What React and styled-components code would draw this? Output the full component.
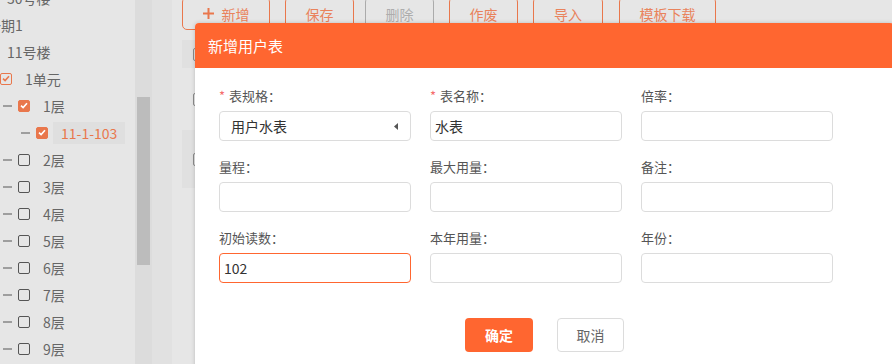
import React from "react";
import styled, { createGlobalStyle } from "styled-components";

const GlobalStyle = createGlobalStyle`
  html, body { margin: 0; padding: 0; background: #e6e6e6; }
  * { box-sizing: border-box; }
`;

const FONT = `"Noto Sans CJK SC", "Microsoft YaHei", "Noto Sans", sans-serif`;

const Page = styled.div`
  position: relative;
  display: flex;
  width: 892px;
  height: 364px;
  overflow: hidden;
  background: #e6e6e6;
  font-family: ${FONT};
`;

const Sidebar = styled.div`
  width: 135px;
  flex: none;
  overflow: hidden;
`;

const Tree = styled.div`
  margin-top: -16px;
  margin-left: -51px;
`;

const TreeRow = styled.div`
  display: flex;
  align-items: center;
  height: 27px;
  padding-left: ${(p) => p.$level * 18}px;
  white-space: nowrap;
`;

const Dash = styled.span`
  flex: none;
  width: 9px;
  height: 2px;
  margin-right: 6px;
  background: #9e9e9e;
`;

const Check = styled.span`
  flex: none;
  display: flex;
  align-items: center;
  justify-content: center;
  width: 12px;
  height: 12px;
  border-radius: 2px;
  border: 1px solid ${(p) => (p.$state === "none" ? "#555" : "#e9774c")};
  background: ${(p) => (p.$state === "checked" ? "#e9774c" : "transparent")};
  color: ${(p) => (p.$state === "checked" ? "#fff" : "#e9774c")};
`;

const NodeLabel = styled.span`
  margin-left: ${(p) => 5 + (p.$shift || 0)}px;
  padding: 0 8px;
  height: 22px;
  line-height: 22px;
  font-size: 14px;
  color: ${(p) => (p.$selected ? "#e9774c" : "#666")};
  background: ${(p) => (p.$selected ? "#dfdfdf" : "transparent")};
`;

const ScrollTrack = styled.div`
  width: 17px;
  flex: none;
  background: #dcdcdc;
  padding: 97px 2px 0;
`;

const ScrollThumb = styled.div`
  width: 13px;
  height: 168px;
  background: #bcbcbc;
`;

const Gutter = styled.div`
  width: 20px;
  flex: none;
  background: #e1e1e1;
`;

const Main = styled.div`
  flex: 1;
  padding-left: 10px;
`;

const Toolbar = styled.div`
  display: flex;
  margin-top: -3px;
`;

const ToolButton = styled.div`
  display: flex;
  align-items: center;
  justify-content: center;
  gap: 8px;
  width: ${(p) => p.$w}px;
  height: 33px;
  margin-left: ${(p) => p.$ml || 0}px;
  border: 1px solid ${(p) => (p.$disabled ? "#ababab" : "#e9774c")};
  border-radius: 5px;
  font-size: 14px;
  color: ${(p) => (p.$disabled ? "#adadad" : "#e9835c")};
`;

const TableHead = styled.div`
  display: flex;
  align-items: center;
  height: 28px;
  margin-top: 10px;
  padding-left: 11px;
  background: #e0e0e0;
`;

const TableRow = styled.div`
  display: flex;
  align-items: center;
  height: ${(p) => p.$h}px;
  padding-left: 11px;
  background: ${(p) => p.$bg || "transparent"};
`;

const RowCheck = styled.span`
  width: 13px;
  height: 13px;
  border: 1px solid #8a8a8a;
  border-radius: 2px;
`;

const Dialog = styled.div`
  position: absolute;
  left: 195px;
  top: 23px;
  width: 699px;
  height: 380px;
  background: #fff;
  border-radius: 4px 4px 0 0;
  box-shadow: 0 0 4px rgba(0, 0, 0, 0.18);
  overflow: hidden;
`;

const DialogHeader = styled.div`
  height: 45px;
  line-height: 45px;
  padding-left: 13px;
  background: #ff6630;
  color: #fff;
  font-size: 15px;
`;

const DialogBody = styled.div`
  padding-top: 18px;
`;

const FormGrid = styled.div`
  display: grid;
  grid-template-columns: repeat(3, 192px);
  column-gap: 19px;
  row-gap: 16px;
  padding-left: 24px;
`;

const Field = styled.div`
  display: flex;
  flex-direction: column;
`;

const Label = styled.div`
  height: 20px;
  line-height: 20px;
  margin-bottom: 5px;
  font-size: 13px;
  color: #555;
  white-space: nowrap;
`;

const Star = styled.span`
  color: #f56c6c;
  margin-right: 4px;
`;

const TextInput = styled.input`
  width: 192px;
  height: 30px;
  padding: 0 4px;
  border: 1px solid ${(p) => (p.$active ? "#ff6630" : "#dcdcdc")};
  border-radius: 4px;
  outline: none;
  font-family: ${FONT};
  font-size: 14px;
  color: #333;
  caret-color: #222;
  background: #fff;
  &:focus { border-color: #ff6630; }
`;

const SelectBox = styled.div`
  display: flex;
  align-items: center;
  justify-content: space-between;
  width: 192px;
  height: 30px;
  padding: 0 12px 0 11px;
  border: 1px solid #dcdcdc;
  border-radius: 4px;
  font-size: 14px;
  color: #333;
`;

const Footer = styled.div`
  display: flex;
  justify-content: center;
  gap: 24px;
  margin-top: 35px;
`;

const PrimaryButton = styled.button`
  width: 68px;
  height: 34px;
  border: none;
  border-radius: 4px;
  background: #ff6630;
  color: #fff;
  font-family: ${FONT};
  font-size: 14px;
  font-weight: 700;
`;

const DefaultButton = styled.button`
  width: 67px;
  height: 34px;
  border: 1px solid #dcdcdc;
  border-radius: 4px;
  background: #fff;
  color: #666;
  font-family: ${FONT};
  font-size: 14px;
`;

const tree = [
  { level: 1, text: "30号楼", state: "none" },
  { level: 0, text: "一期1", state: "none", shift: -2 },
  { level: 1, text: "11号楼", state: "none" },
  { level: 2, text: "1单元", state: "partial" },
  { level: 3, text: "1层", state: "checked" },
  { level: 4, text: "11-1-103", state: "checked", selected: true },
  ...[2, 3, 4, 5, 6, 7, 8, 9].map((n) => ({ level: 3, text: `${n}层`, state: "none" })),
];

const tools = [
  { text: "新增", w: 88, ml: 0, plus: true },
  { text: "保存", w: 69, ml: 15 },
  { text: "删除", w: 69, ml: 11, disabled: true },
  { text: "作废", w: 69, ml: 15 },
  { text: "导入", w: 70, ml: 15 },
  { text: "模板下载", w: 97, ml: 16 },
];

const fields = [
  { label: "表规格", required: true, select: "用户水表" },
  { label: "表名称", required: true, value: "水表" },
  { label: "倍率" },
  { label: "量程" },
  { label: "最大用量" },
  { label: "备注" },
  { label: "初始读数", value: "102", active: true },
  { label: "本年用量" },
  { label: "年份" },
];

function CheckMark() {
  return (
    <svg width="8" height="7" viewBox="0 0 8 7">
      <path d="M1 3.6 L3.1 5.6 L7 1.2" fill="none" stroke="currentColor" strokeWidth="1.6" />
    </svg>
  );
}

export default function App() {
  return (
    <>
      <GlobalStyle />
      <Page>
        <Sidebar>
          <Tree>
            {tree.map((r, i) => (
              <TreeRow key={i} $level={r.level}>
                <Dash />
                <Check $state={r.state}>{r.state !== "none" && <CheckMark />}</Check>
                <NodeLabel $selected={r.selected} $shift={r.shift}>
                  {r.text}
                </NodeLabel>
              </TreeRow>
            ))}
          </Tree>
        </Sidebar>
        <ScrollTrack>
          <ScrollThumb />
        </ScrollTrack>
        <Gutter />
        <Main>
          <Toolbar>
            {tools.map((t) => (
              <ToolButton key={t.text} $w={t.w} $ml={t.ml} $disabled={t.disabled}>
                {t.plus && (
                  <svg width="11" height="11" viewBox="0 0 11 11">
                    <path d="M5.5 0 V11 M0 5.5 H11" stroke="#e9774c" strokeWidth="2" />
                  </svg>
                )}
                {t.text}
              </ToolButton>
            ))}
          </Toolbar>
          <TableHead>
            <RowCheck />
          </TableHead>
          <TableRow $h={62}>
            <RowCheck />
          </TableRow>
          <TableRow $h={58} $bg="#e0e0e0">
            <RowCheck />
          </TableRow>
        </Main>

        <Dialog>
          <DialogHeader>新增用户表</DialogHeader>
          <DialogBody>
            <FormGrid>
              {fields.map((f) => (
                <Field key={f.label}>
                  <Label>
                    {f.required && <Star>*</Star>}
                    {f.label}：
                  </Label>
                  {f.select ? (
                    <SelectBox>
                      <span>{f.select}</span>
                      <svg width="4" height="7" viewBox="0 0 4 7">
                        <path d="M4 0 L0 3.5 L4 7 Z" fill="#555" />
                      </svg>
                    </SelectBox>
                  ) : (
                    <TextInput
                      defaultValue={f.value || ""}
                      $active={f.active}
                      autoFocus={f.active}
                      onFocus={(e) => {
                        const v = e.target.value.length;
                        e.target.setSelectionRange(v, v);
                      }}
                    />
                  )}
                </Field>
              ))}
            </FormGrid>
            <Footer>
              <PrimaryButton>确定</PrimaryButton>
              <DefaultButton>取消</DefaultButton>
            </Footer>
          </DialogBody>
        </Dialog>
      </Page>
    </>
  );
}
